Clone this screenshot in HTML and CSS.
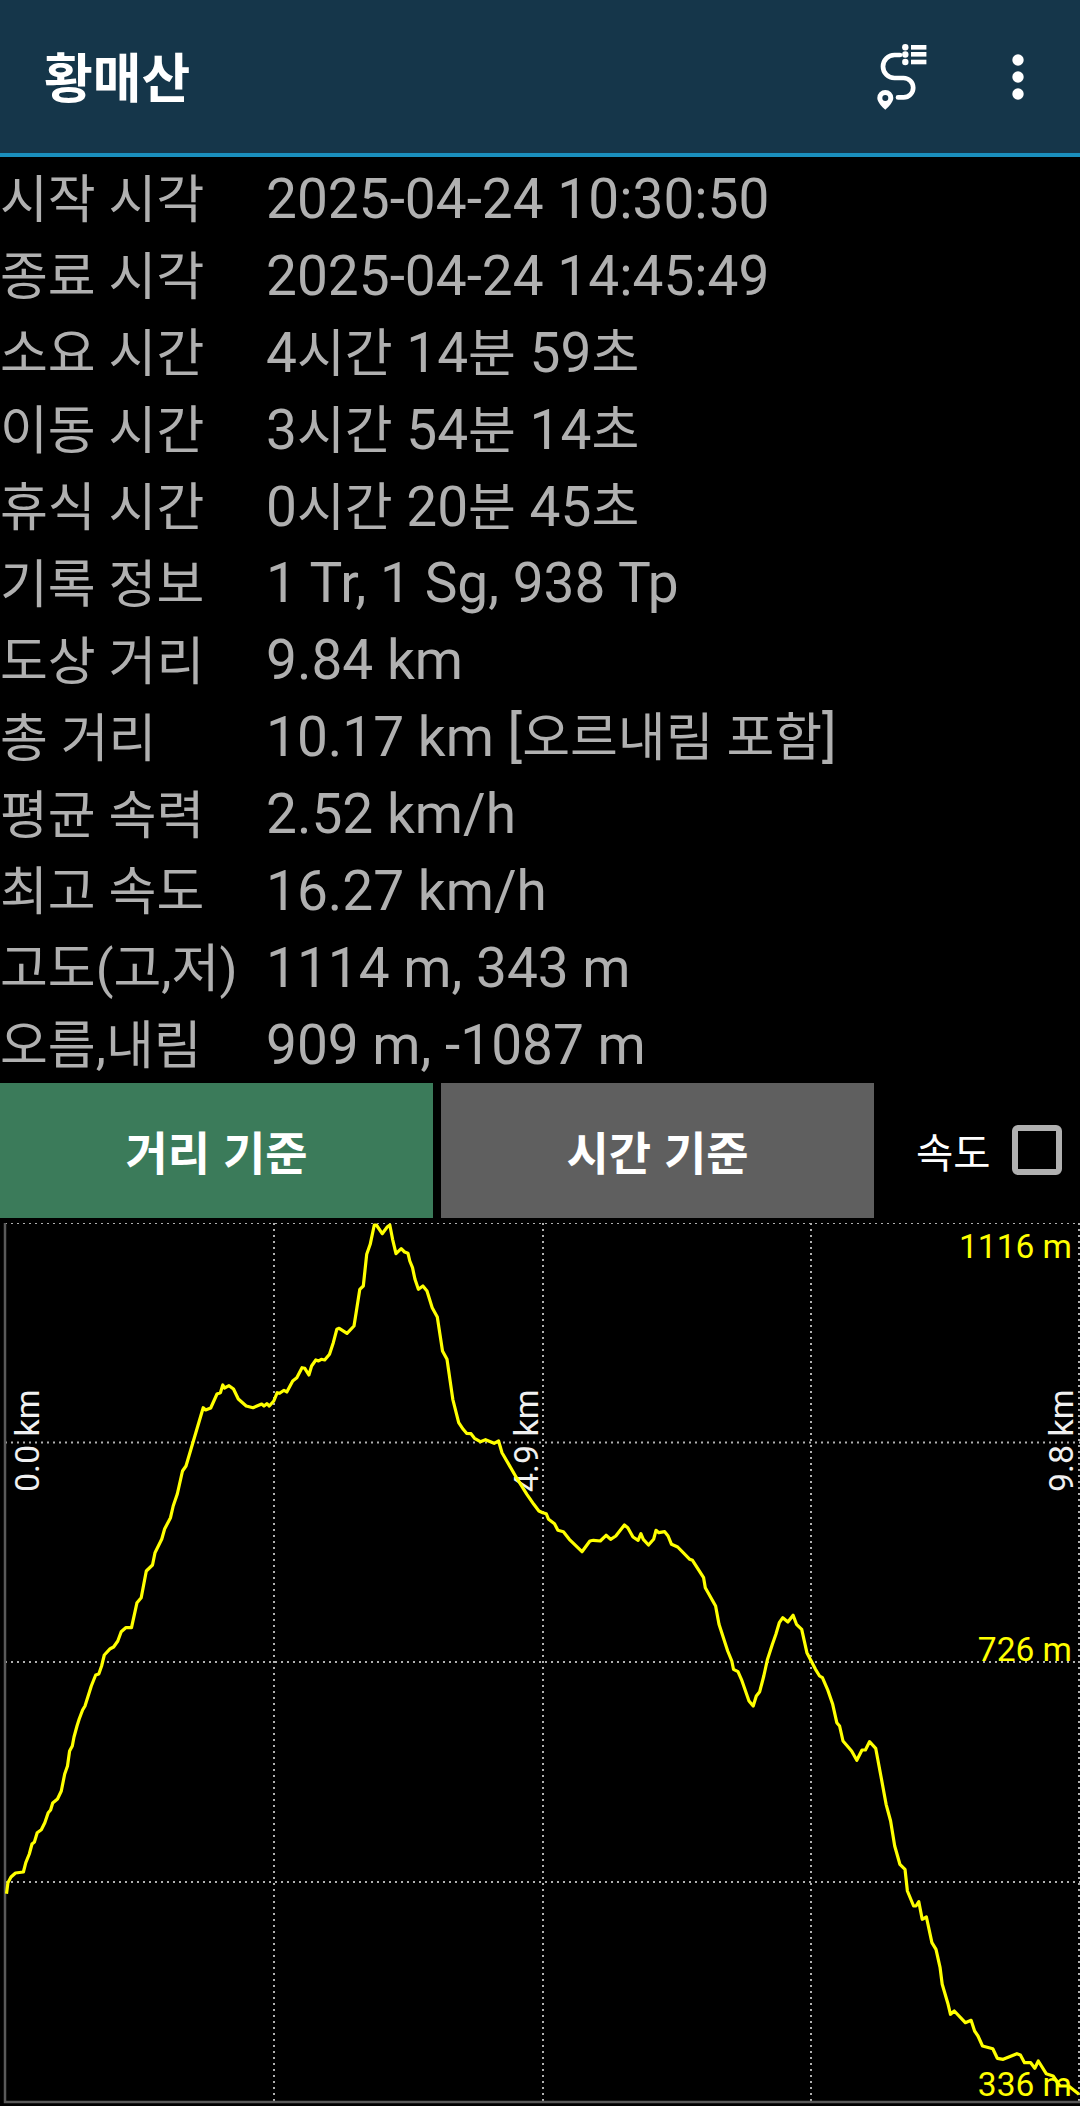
FILE: index.html
```html
<!DOCTYPE html>
<html lang="ko">
<head>
<meta charset="utf-8">
<title>황매산</title>
<link rel="stylesheet" href="styles.css">
</head>
<body>
<header class="appbar">
  <h1 class="appbar-title">황매산</h1>
  <svg class="route-icon" viewBox="0 0 50 66" aria-hidden="true">
    <circle cx="28.3" cy="3.3" r="3.2"/>
    <circle cx="28.3" cy="10.5" r="3.2"/>
    <circle cx="28.3" cy="18" r="3.2"/>
    <rect x="34" y="1" width="15.4" height="4.6"/>
    <rect x="34" y="8" width="15.4" height="4.6"/>
    <rect x="34" y="15.7" width="15.4" height="4.6"/>
    <path class="route-line" d="M23 11H17.5A11.5 11.5 0 0 0 17.5 34H26.5A9.7 9.7 0 0 1 26.5 53.4H21"/>
    <path fill-rule="evenodd" d="M8.3 46a8 8 0 0 1 8 8c0 4-4.500 8.500-8 11.800C4.800 62.500 .3 58 .3 54a8 8 0 0 1 8-8zm0 5a3 3 0 1 0 0 6 3 3 0 0 0 0-6z"/>
  </svg>
  <svg class="more-icon" viewBox="0 0 12 46" aria-hidden="true">
    <circle cx="6" cy="6" r="5.7"/>
    <circle cx="6" cy="23" r="5.7"/>
    <circle cx="6" cy="40" r="5.7"/>
  </svg>
</header>

<main>
  <dl class="stats">
    <div class="stat"><dt>시작 시각</dt><dd>2025-04-24 10:30:50</dd></div>
    <div class="stat"><dt>종료 시각</dt><dd>2025-04-24 14:45:49</dd></div>
    <div class="stat"><dt>소요 시간</dt><dd>4<span class="ko">시간</span> 14<span class="ko">분</span> 59<span class="ko">초</span></dd></div>
    <div class="stat"><dt>이동 시간</dt><dd>3<span class="ko">시간</span> 54<span class="ko">분</span> 14<span class="ko">초</span></dd></div>
    <div class="stat"><dt>휴식 시간</dt><dd>0<span class="ko">시간</span> 20<span class="ko">분</span> 45<span class="ko">초</span></dd></div>
    <div class="stat"><dt>기록 정보</dt><dd>1 Tr, 1 Sg, 938 Tp</dd></div>
    <div class="stat"><dt>도상 거리</dt><dd>9.84 km</dd></div>
    <div class="stat"><dt>총 거리</dt><dd>10.17 km [<span class="ko">오르내림 포함</span>]</dd></div>
    <div class="stat"><dt>평균 속력</dt><dd>2.52 km/h</dd></div>
    <div class="stat"><dt>최고 속도</dt><dd>16.27 km/h</dd></div>
    <div class="stat"><dt>고도(고,저)</dt><dd>1114 m, 343 m</dd></div>
    <div class="stat"><dt>오름,내림</dt><dd>909 m, -1087 m</dd></div>
  </dl>

  <div class="controls">
    <button class="mode mode-active" type="button">거리 기준</button>
    <button class="mode mode-idle" type="button">시간 기준</button>
    <label class="speed-toggle"><span>속도</span><span class="checkbox"></span></label>
  </div>

  <svg class="chart" viewBox="0 1222 1080 884" aria-label="고도 그래프">
    <g class="grid">
      <path d="M5 1222H1080M5 1441.500H1080M5 1661H1080M5 1881H1080"/>
      <path d="M274 1222V2101M543 1222V2101M811 1222V2101M1079 1222V2101"/>
    </g>
    <path class="frame" d="M5 1222V2101H1080"/>
    <text class="km" transform="translate(38.500 1491) rotate(-90)">0.0 km</text>
    <text class="km" transform="translate(538 1491) rotate(-90)">4.9 km</text>
    <text class="km" transform="translate(1073 1491) rotate(-90)">9.8 km</text>
    <text class="alt" x="1072" y="1257">1116 m</text>
    <text class="alt" x="1072" y="1660">726 m</text>
    <text class="alt" x="1072" y="2095">336 m</text>
    <polyline class="trace" points="6.500,1892.700 7.900,1881.700 11,1876 15.500,1872 23.400,1871 25.800,1861.700 29.300,1853 32,1843 34.400,1841 37.200,1831.700 41.300,1828.700 44.800,1821.700 48.200,1811.700 50.600,1809 52.700,1802 57.500,1798 61.300,1790 64.700,1773 67.500,1765 69.600,1750 72.300,1745 74,1736 77,1725 79.200,1718 82.600,1709 85,1705 91.300,1685 95.700,1674 98.800,1673 101.600,1665 104.300,1654 110.200,1647.700 113.600,1646 117.800,1640 121.200,1630.700 125.700,1626.700 131.500,1626.700 137,1601.700 141.200,1596.700 146.300,1570 152.500,1564 155,1551.700 161.800,1538 164.600,1528 170.500,1516.700 173.200,1505 177.300,1493 182.500,1470 186,1465 203.200,1406.700 205.600,1409 210.700,1407 217,1393 220.400,1391.700 222.800,1384 224.500,1387 229,1384.700 233.500,1388 238.300,1398 246.200,1405 253,1406.700 261.700,1403 264,1405 266.900,1402.700 269.300,1405 273.800,1400 277.200,1391.700 279.600,1392.300 284,1389.300 286.800,1391 292.700,1380 296.800,1376.700 302,1366.700 304.800,1367.300 308.900,1374 311.600,1365 315.800,1359 318.500,1360 321.300,1358.300 324.700,1359 329.500,1353.300 333.300,1341.700 336.800,1328.300 339.200,1327.300 347,1332.300 354,1325 356.400,1310 359.800,1288.300 363.300,1285 366.700,1253.300 370.200,1243.300 374.300,1224 376.400,1224 382.200,1232.700 387.400,1225.700 389.800,1224 392.600,1238.300 396,1252.700 401.200,1247.700 404.600,1251 408,1252.300 409.800,1260 412.500,1266.700 415,1278.300 418.400,1288.300 422.900,1285 427,1290 432.200,1306.700 437.300,1316 442.500,1350 447,1358.300 452.800,1398.300 458.700,1421.700 463.200,1428.300 466.600,1432.300 471,1432.700 474.500,1437.300 480.400,1440.700 485.500,1438.700 494.100,1442.300 498.600,1440 502,1451.700 516.500,1476.700 526.900,1493.300 533.800,1503.300 538.900,1510 542.800,1511.700 546.200,1512.700 548.600,1518.300 554.500,1522.700 557.900,1529.300 563.400,1530.700 569.300,1538.300 582,1550.700 589.900,1540 593.400,1539.300 600.300,1540 606.100,1534.300 610.600,1538.300 615.800,1535 624.400,1524 627.800,1526.700 633,1536 638.100,1539.300 640.900,1532.700 643.300,1538.300 648.500,1544 653.600,1538.300 656,1529.300 658.800,1531.700 664.700,1530.700 668.100,1535 671.500,1543.300 677.700,1546 689.800,1558.300 692.500,1559.300 703.600,1576.700 705.300,1586.700 715.600,1605 719,1623.300 727.700,1650 731.800,1660 733.500,1668.300 738,1670.700 741.400,1678.300 749,1700 753.200,1705 756.300,1695 759.700,1690.700 763.800,1675 767.300,1659 772.400,1643.300 775.900,1633.300 779.300,1621.700 782.800,1616.700 787.900,1621 793.100,1614.300 796.500,1623.300 801.700,1628.300 806.900,1651.700 808.600,1655 815.500,1668.300 819.600,1675 822.400,1676.700 827.500,1688.300 832.700,1703.300 836.800,1721.700 839.600,1725 843,1740 851.600,1750 856.800,1759.300 862,1749 865.400,1749 869.500,1740.700 875.700,1747.300 880.900,1775 886.100,1803.300 890.600,1820 894.700,1845 899.900,1863.300 905,1868.300 907.400,1890 913.600,1905 916,1905 918.800,1900.700 922.200,1918.300 926.400,1916 931.900,1941.700 936,1948.300 940.100,1966.700 942.200,1983.300 948.100,2003.300 950.500,2013.300 954.300,2010 965.300,2021.700 971.100,2019.300 974.600,2030 978,2035 982.500,2045 992.800,2047.700 997.300,2057.300 1003.200,2058.300 1016.900,2052.700 1020.400,2054 1024.500,2061.700 1030.700,2061.700 1034.800,2067.300 1038.300,2060 1046.200,2072.700 1053.100,2075 1060,2085 1068.600,2085 1079,2093.300"/>
  </svg>
</main>
</body>
</html>
```
FILE: styles.css
```css
* { box-sizing: border-box; }

html, body {
  margin: 0;
  background: #000;
}

body {
  width: 1080px;
  height: 2106px;
  overflow: hidden;
  font-family: Roboto, "Noto Sans CJK KR", sans-serif;
}

.appbar {
  display: flex;
  align-items: center;
  height: 157px;
  padding: 0 56px 0 44px;
  background: #15364a;
  border-bottom: 4px solid #1a8fbd;
}

.appbar-title {
  flex: 1;
  margin: 0;
  padding-bottom: 2px;
  color: #fff;
  font-family: "Noto Sans CJK KR", sans-serif;
  font-size: 53px;
  font-weight: 700;
  line-height: 1;
}

.route-icon {
  width: 50px;
  height: 66px;
  margin: 0 85px 0 0;
  fill: #fff;
}

.route-line {
  fill: none;
  stroke: #fff;
  stroke-width: 4.700;
  stroke-linecap: round;
}

.more-icon {
  width: 12px;
  height: 46px;
  fill: #fff;
}

.stats {
  margin: 0;
  padding-top: 4px;
}

.stat {
  display: grid;
  grid-template-columns: 266px 1fr;
  align-items: center;
  height: 76.900px;
  color: #b0b0b0;
  font-size: 55px;
  line-height: 1;
  white-space: nowrap;
}

.stat dt {
  padding-top: 4px;
  font-size: 52px;
}

.stat dd {
  margin: 0;
}

.ko {
  font-size: 52px;
}

.controls {
  display: flex;
  align-items: stretch;
  height: 135px;
  margin-top: -1px;
}

.mode {
  width: 433px;
  padding: 0;
  border: 0;
  color: #fff;
  font-family: "Noto Sans CJK KR", sans-serif;
  font-size: 46px;
  font-weight: 700;
}

.mode-active {
  background: #3b7b5a;
}

.mode-idle {
  margin-left: 8px;
  background: #5f5f5f;
}

.speed-toggle {
  display: flex;
  align-items: center;
  margin-left: 42px;
  gap: 21px;
  color: #fff;
  font-family: "Noto Sans CJK KR", sans-serif;
  font-size: 40.500px;
}

.checkbox {
  width: 50px;
  height: 50px;
  border: 6px solid #b0b0b0;
  border-radius: 6px;
}

.chart {
  display: block;
  width: 1080px;
  height: 884px;
  margin-top: 5px;
}

.grid path {
  fill: none;
  stroke: #b0b0b0;
  stroke-width: 2;
  stroke-dasharray: 2 4;
}

.frame {
  fill: none;
  stroke: #5a5a5a;
  stroke-width: 2.500;
}

.km {
  fill: #f0f0f0;
  font-size: 34px;
}

.alt {
  fill: #ffff00;
  font-size: 33.500px;
  text-anchor: end;
}

.trace {
  fill: none;
  stroke: #ffff00;
  stroke-width: 3.200;
  stroke-linejoin: round;
}
```
